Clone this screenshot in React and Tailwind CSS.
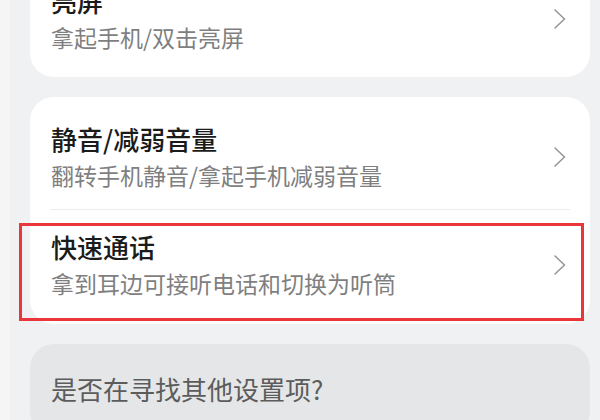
const font = { fontFamily: '"Noto Sans CJK SC", "Noto Sans", sans-serif' }

const Chevron = () => (
  <svg width="14" height="22" viewBox="0 0 14 22" fill="none" className="shrink-0">
    <polyline points="2,2 11.5,11 2,20" stroke="#979797" strokeWidth="1.6" strokeLinecap="round" strokeLinejoin="round" />
  </svg>
)

const Item = ({ title, subtitle, className = '' }) => (
  <div className={`flex items-center justify-between pl-[21px] pr-[23px] ${className}`}>
    <div className="flex flex-col">
      <div className="text-[26px] leading-[32px] font-medium text-[#1b1b1b]">{title}</div>
      <div className="mt-[6px] text-[23px] leading-[29px] text-[#7f7f7f]">{subtitle}</div>
    </div>
    <Chevron />
  </div>
)

export default function App() {
  return (
    <div className="h-[420px] w-[600px] overflow-hidden bg-[#f0f1f3]" style={font}>
      <div className="flex h-full">
        <div className="w-[10px] shrink-0 bg-[#f5f5f6]" />
        <div className="ml-[20px] mr-[10px] flex flex-1 flex-col gap-[20px] -mt-[42px]">
          <div className="rounded-[24px] bg-white">
            <Item title="亮屏" subtitle="拿起手机/双击亮屏" className="pt-[27px] pb-[25px]" />
          </div>

          <div className="relative rounded-[24px] bg-white">
            <Item title="静音/减弱音量" subtitle="翻转手机静音/拿起手机减弱音量" className="pt-[26px] pb-[19px]" />
            <div className="mx-[20px] h-px bg-[#ececec]" />
            <Item title="快速通话" subtitle="拿到耳边可接听电话和切换为听筒" className="pt-[21px] pb-[26px]" />
            <div className="absolute left-[-11px] top-[126px] h-[98px] w-[565px] border-[3px] border-[#e8363b]" />
          </div>

          <div className="rounded-[24px] bg-[#e5e6e8] px-[21px] pt-[29px] pb-[30px]">
            <div className="text-[26px] leading-[32px] text-[#5c5c5c]">是否在寻找其他设置项?</div>
          </div>
        </div>
      </div>
    </div>
  )
}
